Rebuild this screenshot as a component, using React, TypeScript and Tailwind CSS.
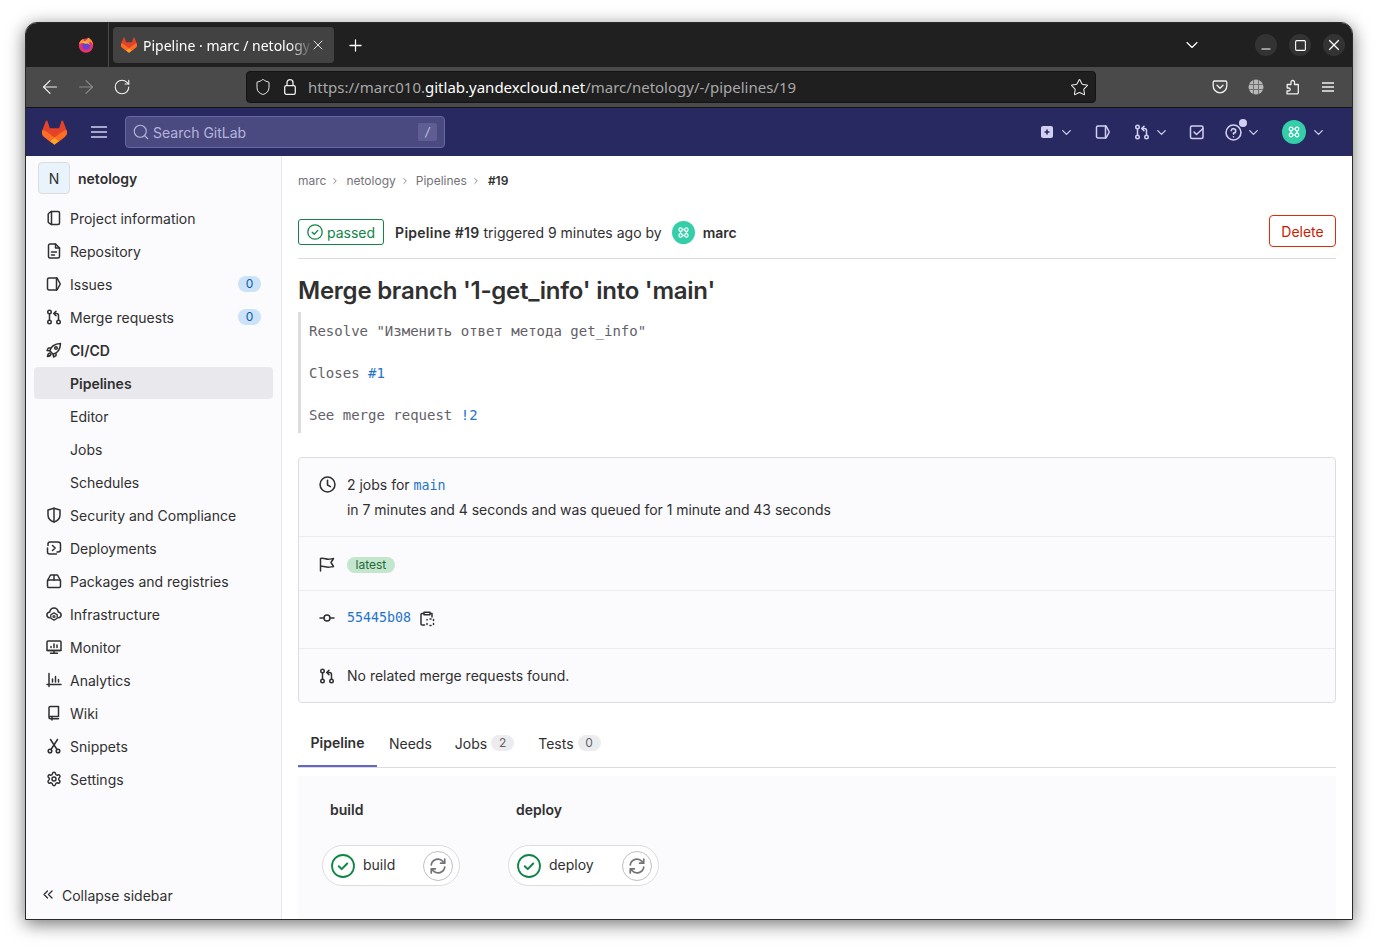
import { ArrowLeft, ArrowRight, ChevronDown, ChevronRight, Minus, Plus, RotateCw, Search, Settings, Shield, Square, Star, X } from "lucide-react";
import type { ReactNode } from "react";

function GitlabLogo({ size = 24 }: { size?: number }) {
  return (
    <svg width={size} height={size} viewBox="0 0 25 24" aria-hidden="true">
      <path fill="#E24329" d="m24.507 9.5-.034-.09L21.082.562a.896.896 0 0 0-1.694.091l-2.29 7.01H7.825L5.535.653a.898.898 0 0 0-1.694-.09L.451 9.411.416 9.5a6.297 6.297 0 0 0 2.09 7.278l.012.01.03.022 5.16 3.867 2.56 1.935 1.554 1.176a1.051 1.051 0 0 0 1.268 0l1.555-1.176 2.56-1.935 5.197-3.89.014-.01A6.297 6.297 0 0 0 24.507 9.5Z" />
      <path fill="#FC6D26" d="m24.507 9.5-.034-.09a11.44 11.44 0 0 0-4.56 2.051l-7.447 5.632 4.742 3.584 5.197-3.89.014-.01A6.297 6.297 0 0 0 24.507 9.5Z" />
      <path fill="#FCA326" d="m7.707 20.677 2.56 1.935 1.555 1.176a1.051 1.051 0 0 0 1.268 0l1.555-1.176 2.56-1.935-4.743-3.584-4.755 3.584Z" />
      <path fill="#FC6D26" d="M5.01 11.461a11.43 11.43 0 0 0-4.56-2.05L.416 9.5a6.297 6.297 0 0 0 2.09 7.278l.012.01.03.022 5.16 3.867 4.745-3.584-7.444-5.632Z" />
    </svg>
  );
}

function FirefoxLogo() {
  return (
    <svg width="16" height="16" viewBox="0 0 16 16" aria-hidden="true">
      <circle cx="8" cy="8.600" r="7.200" fill="#e6336c" />
      <path fill="#ff9a2e" d="M1 7c.6-2.600 2.600-4.600 4.600-5-.5 1 0 1.800.9 2.200C7.600 3.400 9.400 2.600 9.900.4c2.800 1.300 5.300 4 5.200 8-.5-2.300-2-3.800-3.600-4.200.8 1.500-.6 2-1.800 1.800L7 7.500 4.200 6 1 7Z" />
      <circle cx="8.200" cy="8.800" r="3.900" fill="#6f3fd0" />
      <path fill="#f7c13b" d="M4.500 5.300 8 4.800c2 .2 3.500 1.500 3.900 3.400-1-1.200-2.400-1.800-3.900-1.500-1.400.2-2.600-.4-3.500-1.400Z" />
    </svg>
  );
}

function Identicon({ size }: { size: number }) {
  return (
    <svg width={size} height={size} viewBox="0 0 24 24" aria-hidden="true" className="shrink-0">
      <circle cx="12" cy="12" r="12" fill="#34cfa8" />
      <g fill="none" stroke="#ffffff" strokeWidth="1.200">
        <circle cx="9" cy="9" r="1.800" />
        <circle cx="15" cy="9" r="1.800" />
        <circle cx="9" cy="15" r="1.800" />
        <circle cx="15" cy="15" r="1.800" />
        <path d="M10.800 9h2.400M10.800 15h2.400M9 10.800v2.400M15 10.800v2.400" />
      </g>
    </svg>
  );
}

function Bars({ width, gap, className = "" }: { width: number; gap: number; className?: string }) {
  const mid = gap + 1;
  return (
    <svg width={width} height={gap * 2 + 2} viewBox={`0 0 ${width} ${gap * 2 + 2}`} stroke="currentColor" strokeWidth="1.300" aria-hidden="true" className={`shrink-0 ${className}`}>
      <path d={`M0 1h${width}M0 ${mid}h${width}M0 ${mid + gap}h${width}`} />
    </svg>
  );
}

// gitlab style 16px outline icon
function Gl({ children, size = 16, className = "" }: { children: ReactNode; size?: number; className?: string }) {
  return (
    <svg width={size} height={size} viewBox="0 0 16 16" fill="none" stroke="currentColor" strokeWidth="1.500" strokeLinecap="round" strokeLinejoin="round" aria-hidden="true" className={`shrink-0 ${className}`}>
      {children}
    </svg>
  );
}

const icons: Record<string, ReactNode> = {
  project: <><path d="M5.500 1.500 3.200 2.800c-.6.3-1 .8-1 1.500v7.400c0 .7.400 1.200 1 1.500l2.300 1.300z" /><path d="M5.500 1.500H12a1.500 1.500 0 0 1 1.500 1.500v10a1.500 1.500 0 0 1-1.500 1.500H5.500" /></>,
  repo: <><path d="M9.500 1H4a1.500 1.500 0 0 0-1.500 1.500v11A1.500 1.500 0 0 0 4 15h8a1.500 1.500 0 0 0 1.500-1.500V5z" /><path d="M9.500 1v4h4M5.500 9h5M5.500 12h3" /></>,
  issues: <><path d="M10.500 2H3a1.500 1.500 0 0 0-1.500 1.500v9A1.500 1.500 0 0 0 3 14h7.500a1 1 0 0 0 1-.8L14.300 8l-2.800-5.200a1 1 0 0 0-1-.8z" /><path d="M10.500 2v12" /></>,
  merge: <><circle cx="3.500" cy="3" r="1.750" /><circle cx="3.500" cy="13" r="1.750" /><circle cx="12.500" cy="13" r="1.750" /><path d="M3.500 4.800v6.400M12.500 11.200V6.500c0-1.200-.8-2-2-2H8M10 2.200 7.700 4.500 10 6.800" /></>,
  rocket: <><path d="M5.500 10.500 3.800 8.800c1-4 4.700-7 10.700-7.300-.3 6-3.300 9.700-7.300 10.700z" /><circle cx="10" cy="6" r="1.300" /><path d="M4.500 6H2.300L1 8.500l2.800.3M10 11.500v2.200L7.500 15l-.3-2.800M4 11c-1.500.3-2.300 1.500-2.500 3.500 2-.2 3.200-1 3.500-2.500" /></>,
  shield: <><path d="M8 1.300 2 3v5c0 3.500 2.500 5.800 6 7 3.500-1.200 6-3.500 6-7V3z" /><path d="M8 1.300V15" /></>,
  deploy: <><path d="M2 5.500V4a2 2 0 0 1 2-2h8a2.500 2.500 0 0 1 2.500 2.500v5A2.500 2.500 0 0 1 12 12h-1" /><path d="M1.500 8v4a2 2 0 0 0 2 2h7" /><path d="m6.500 5.500 2.700 2.500-2.700 2.500" /></>,
  pkg: <><rect x="1.500" y="7" width="13" height="7.500" rx="1.200" /><path d="M1.500 7.500 4.500 2h7l3 5.500M8 2v5" /></>,
  infra: <><path d="M3.300 11.800C1.800 11.400.9 10.300.9 9c0-1.600 1.200-2.800 2.800-3C4.200 3.600 6 2 8 2s3.800 1.600 4.300 4c1.600.2 2.800 1.400 2.800 3 0 1.300-.9 2.400-2.400 2.800" /><circle cx="8" cy="10.500" r="1" strokeWidth="1.200" /><path d="m8 6.900 3.200 1.800v3.600L8 14.100l-3.200-1.800V8.700z" strokeWidth="1.300" /></>,
  monitor: <><rect x="1" y="2" width="14" height="9.500" rx="1" /><path d="M1 11.500h14M8 11.500V14M4.500 14.300h7M5 8.500V7.500M8 8.500V5M11 8.500V6" /></>,
  analytics: <><path d="M3 1.500v13M1 12.500h14M6.500 10V7M9.500 10V4.500M12.500 10V7.500" /></>,
  wiki: <><path d="M3 12.500V2.800C3 2 3.700 1.500 4.400 1.500h8.100V11.500H4.300C3.500 11.500 3 12 3 12.500c0 .7.500 1.200 1.300 1.200h8.200" /><path d="M6 11.500v3.500" /></>,
  snippets: <><circle cx="4" cy="13" r="1.800" /><circle cx="12" cy="13" r="1.800" /><path d="M5 11.500 11.500 1.500M11 11.500 4.500 1.500" /></>,
};

const navTop = [
  { icon: "project", label: "Project information" },
  { icon: "repo", label: "Repository" },
  { icon: "issues", label: "Issues", count: 0 },
  { icon: "merge", label: "Merge requests", count: 0 },
];
const navBottom = [
  { icon: "shield", label: "Security and Compliance" },
  { icon: "deploy", label: "Deployments" },
  { icon: "pkg", label: "Packages and registries" },
  { icon: "infra", label: "Infrastructure" },
  { icon: "monitor", label: "Monitor" },
  { icon: "analytics", label: "Analytics" },
  { icon: "wiki", label: "Wiki" },
  { icon: "snippets", label: "Snippets" },
  { icon: "settings", label: "Settings" },
];

function NavRow({ icon, label, count, bold }: { icon?: string; label: string; count?: number; bold?: boolean }) {
  return (
    <div className={`flex h-[32px] items-center rounded mx-[8px] mb-[1px] pl-[12px] pr-[12px] text-[#303030] ${bold ? "font-semibold" : ""}`}>
      <span className="w-[24px] shrink-0">
        {icon === "settings" ? <Settings size={16} strokeWidth={2.200} /> : icon ? <Gl>{icons[icon]}</Gl> : null}
      </span>
      <span className="flex-1">{label}</span>
      {count !== undefined ? (
        <span className="flex h-[16px] w-[23px] items-center justify-center rounded-full bg-[#cbe2f9] text-[12px] text-[#0b5cad]">{count}</span>
      ) : null}
    </div>
  );
}

function Sidebar() {
  return (
    <aside className="flex w-[256px] shrink-0 flex-col border-r border-[#e9e8ed] bg-[#fbfafd] text-[14px]">
      <div className="flex items-center gap-[8px] pl-[12px] pt-[6px] pb-[8px]">
        <div className="flex h-[32px] w-[32px] items-center justify-center rounded border border-[#dcdcde] bg-[#e9f3fc] text-[#303030]">N</div>
        <span className="font-semibold text-[#303030]">netology</span>
      </div>
      {navTop.map((n) => <NavRow key={n.label} {...n} />)}
      <NavRow icon="rocket" label="CI/CD" bold />
      <div className="mx-[8px] mb-[1px] flex h-[32px] items-center rounded bg-[#e9e8ed] pl-[36px] font-semibold text-[#303030]">Pipelines</div>
      <NavRow label="Editor" />
      <NavRow label="Jobs" />
      <NavRow label="Schedules" />
      {navBottom.map((n) => <NavRow key={n.label} {...n} />)}
      <div className="mt-auto flex h-[48px] items-center pl-[16px] text-[#303030]">
        <svg width="12" height="12" viewBox="0 0 12 12" fill="none" stroke="currentColor" strokeWidth="1.300" strokeLinecap="round" strokeLinejoin="round" aria-hidden="true">
          <path d="M5.500 2 2 5.500 5.500 9M10 2 6.500 5.500 10 9" />
        </svg>
        <span className="ml-[8px]">Collapse sidebar</span>
      </div>
    </aside>
  );
}

function InfoRow({ icon, children, className }: { icon: ReactNode; children: ReactNode; className: string }) {
  return (
    <div className={`flex px-[20px] ${className}`}>
      <span className="w-[28px] shrink-0 text-[#303030]">{icon}</span>
      <div className="min-w-0 flex-1">{children}</div>
    </div>
  );
}

function JobPill({ name, width }: { name: string; width: string }) {
  return (
    <div className={`flex h-[41px] items-center rounded-full border border-[#dcdcde] bg-white pl-[8px] ${width}`}>
      <svg width="24" height="24" viewBox="0 0 24 24" fill="none" aria-hidden="true" className="shrink-0">
        <circle cx="12" cy="12" r="11" stroke="#108548" strokeWidth="1.800" />
        <path d="m7.800 12.300 2.900 2.800 5.500-5.600" stroke="#108548" strokeWidth="2" strokeLinecap="round" strokeLinejoin="round" />
      </svg>
      <span className="-mt-[2px] ml-[8px] flex-1 text-[14px] text-[#303030]">{name}</span>
      <span className="mr-[6px] flex h-[30px] w-[30px] items-center justify-center rounded-full border border-[#bfbfc3] text-[#737278]">
        <Gl size={18}><path d="M2 7a6 6 0 0 1 10.500-3L14 5.500M14 1.800v3.700h-3.700M14 9a6 6 0 0 1-10.500 3L2 10.500M2 14.200v-3.700h3.700" /></Gl>
      </span>
    </div>
  );
}

export default function App() {
  return (
    <div className="h-[948px] w-[1378px] overflow-hidden bg-white pt-[22px] pl-[25px] [font-family:Inter,sans-serif]">
      <div className="flex h-[898px] w-[1328px] flex-col overflow-hidden rounded-t-[12px] border border-[#2a2a2a] bg-white shadow-[0_4px_18px_rgba(0,0,0,0.55)]">
        {/* browser tabs */}
        <div className="flex h-[44px] shrink-0 items-center bg-[#202020] text-white [font-family:'Noto_Sans',sans-serif]">
          <div className="flex h-full w-[83px] items-center justify-end border-r border-[#4a4a4a] pr-[14px]"><FirefoxLogo /></div>
          <div className="ml-[4px] flex h-[36px] w-[221px] items-center rounded bg-[#424242] pl-[8px]">
            <GitlabLogo size={16} />
            <span className="ml-[6px] w-[170px] overflow-hidden whitespace-nowrap text-[14px] [mask-image:linear-gradient(to_right,black_86%,transparent)]">Pipeline · marc / netology</span>
            <X size={16} className="-ml-[3px] shrink-0 text-[#dddddd]" strokeWidth={1.500} />
          </div>
          <Plus size={19} className="ml-[12px]" strokeWidth={1.600} />
          <ChevronDown size={20} className="ml-[817px]" strokeWidth={1.400} />
          <div className="ml-[53px] flex gap-[12px]">
            <span className="flex h-[22px] w-[22px] items-center justify-center rounded-full bg-[#333333]"><Minus size={14} className="translate-y-[4px]" /></span>
            <span className="flex h-[22px] w-[22px] items-center justify-center rounded-full bg-[#333333]"><Square size={13} strokeWidth={2} /></span>
            <span className="flex h-[22px] w-[22px] items-center justify-center rounded-full bg-[#333333]"><X size={18} strokeWidth={1.600} /></span>
          </div>
        </div>
        {/* browser toolbar */}
        <div className="flex h-[41px] shrink-0 items-center border-b border-b-[#141414] bg-[#4a4a4a] text-[#f0f0f0] [font-family:'Noto_Sans',sans-serif]">
          <ArrowLeft size={22} className="ml-[13px]" strokeWidth={1.300} />
          <ArrowRight size={22} className="ml-[14px] text-[#8a8a8a]" strokeWidth={1.300} />
          <RotateCw size={18} className="ml-[16px]" strokeWidth={1.500} />
          <div className="ml-[115px] flex h-[32px] w-[850px] items-center rounded border border-[#141414] bg-[#1f1f1f] pl-[7px]">
            <Shield size={18} strokeWidth={1.300} />
            <svg width="12" height="16" viewBox="0 0 12 16" fill="none" stroke="currentColor" strokeWidth="1.300" aria-hidden="true" className="ml-[12px]">
              <rect x="0.700" y="6.700" width="10.600" height="8.600" rx="1.600" />
              <path d="M3 6.500V3.700a3 3 0 0 1 6 0v2.800" />
            </svg>
            <span className="ml-[12px] flex-1 whitespace-nowrap text-[15px] text-[#a8a8a8]">https://marc010.<span className="text-white">gitlab.yandexcloud.net</span>/marc/netology/-/pipelines/19</span>
            <Star size={19} className="mr-[6px]" strokeWidth={1.300} />
          </div>
          <svg width="16" height="16" viewBox="0 0 16 16" fill="none" stroke="currentColor" strokeWidth="1.300" strokeLinejoin="round" strokeLinecap="round" aria-hidden="true" className="ml-[116px]">
            <path d="M2.500 2h11c.8 0 1.300.5 1.300 1.300V7a6.800 6.800 0 0 1-13.600 0V3.300C1.200 2.500 1.700 2 2.500 2z" />
            <path d="m5 6.300 3 2.900 3-2.900" />
          </svg>
          <svg width="16" height="16" viewBox="0 0 16 16" fill="none" aria-hidden="true" className="ml-[20px]">
            <circle cx="8" cy="8" r="7.500" fill="#b8b8b8" />
            <path d="M1 5.500h14M1 10.500h14M5.500 1v14M10.500 1v14" stroke="#6a6a6a" strokeWidth="0.900" />
          </svg>
          <svg width="16" height="16" viewBox="0 0 16 16" fill="none" stroke="currentColor" strokeWidth="1.300" strokeLinejoin="round" aria-hidden="true" className="ml-[21px]">
            <path d="M2 14.800h10.500c.5 0 .8-.3.800-.8V5.500h-3.800V3.700a1.800 1.800 0 1 0-3.500 0v1.800H2.200V9h1.500a1.500 1.500 0 0 1 0 3H2z" />
          </svg>
          <Bars width={12} gap={4} className="ml-[21px]" />
        </div>
        {/* gitlab top nav */}
        <div className="flex h-[48px] shrink-0 items-center bg-[#292961] text-[#d1d0f0]">
          <span className="ml-[16px]"><GitlabLogo size={25} /></span>
          <Bars width={16} gap={5} className="ml-[24px]" />
          <div className="ml-[18px] flex h-[32px] w-[320px] items-center rounded border border-[#6666a8] bg-[#4a4a80] pl-[6px] text-[14px] text-[#b5b4dc]">
            <Search size={18} strokeWidth={1.500} />
            <span className="ml-[3px] flex-1">Search GitLab</span>
            <span className="mr-[7px] flex h-[18px] w-[19px] items-center justify-center rounded-[2px] bg-[#5e5e94] text-[12px] italic text-[#c8c7e8]">/</span>
          </div>
          <svg width="14" height="14" viewBox="0 0 14 14" aria-hidden="true" className="ml-[595px]">
            <rect x="1" y="1" width="12" height="12" rx="2" fill="#d1d0f0" />
            <path d="M7 4.500v5M4.500 7h5" stroke="#292961" strokeWidth="1.600" />
          </svg>
          <ChevronDown size={15} className="ml-[5px]" strokeWidth={2} />
          <Gl className="ml-[21px]">{icons.issues}</Gl>
          <Gl className="ml-[23px]">{icons.merge}</Gl>
          <ChevronDown size={15} className="ml-[4px]" strokeWidth={2} />
          <Gl className="ml-[20px]"><rect x="1.500" y="2" width="12.500" height="12.500" rx="1.500" /><path d="m5 8 2.500 2.500 6.500-6" /></Gl>
          <span className="relative ml-[20px] flex items-center">
            <Gl size={17}><circle cx="8" cy="8" r="7" /><path d="M5.900 6.200A2.100 2.100 0 1 1 8 8.600v.9M8 12v.1" /></Gl>
            <span className="absolute left-[14px] top-[-5px] h-[8px] w-[8px] rounded-full bg-[#d1d0f0]" />
          </span>
          <ChevronDown size={15} className="ml-[4px]" strokeWidth={2} />
          <span className="ml-[21px]"><Identicon size={24} /></span>
          <ChevronDown size={15} className="ml-[5px]" strokeWidth={2} />
        </div>
        {/* page */}
        <div className="flex min-h-0 flex-1">
          <Sidebar />
          <main className="min-w-0 flex-1 overflow-hidden px-[16px] text-[14px] text-[#303030]">
            <div className="flex h-[50px] items-center text-[12px] text-[#737278]">
              <span>marc</span><ChevronRight size={10} className="ml-[4px] mr-[6px]" />
              <span>netology</span><ChevronRight size={10} className="ml-[4px] mr-[6px]" />
              <span>Pipelines</span><ChevronRight size={10} className="ml-[4px] mr-[7px]" />
              <span className="font-semibold text-[#303030]">#19</span>
            </div>
            <div className="flex items-center border-b border-[#dcdcde] pt-[9px] pb-[11px]">
              <div className="mt-[2px] flex items-center">
                <span className="flex h-[26px] items-center rounded-[3px] border border-[#108548] px-[8px] text-[#108548]">
                  <svg width="16" height="16" viewBox="0 0 16 16" fill="none" aria-hidden="true">
                    <circle cx="8" cy="8" r="7.200" stroke="#108548" strokeWidth="1.300" />
                    <path d="m5.200 8.200 2 2 3.600-3.800" stroke="#108548" strokeWidth="1.300" strokeLinecap="round" strokeLinejoin="round" />
                  </svg>
                  <span className="ml-[4px]">passed</span>
                </span>
                <span className="ml-[11px] font-semibold tracking-[0.018em]">Pipeline #19</span>
                <span className="ml-[4px]">triggered 9 minutes ago by</span>
                <span className="ml-[10px]"><Identicon size={23} /></span>
                <span className="ml-[8px] font-semibold">marc</span>
              </div>
              <span className="ml-auto flex h-[32px] w-[67px] items-center justify-center rounded border border-[#dd2b0e] text-[#c91c00]">Delete</span>
            </div>
            <h1 className="mt-[16px] text-[24px] leading-[32px] font-semibold tracking-[-0.01em] text-[#303030]">Merge branch '1-get_info' into 'main'</h1>
            <div className="mt-[5px] border-l-[3px] border-[#dcdcde] pt-[9px] pb-[7px] pl-[8px] leading-[21px] [font-family:'DejaVu_Sans_Mono',monospace] text-[#626168] text-[14px]">
              <div>Resolve "Изменить ответ метода get_info"</div>
              <div className="h-[21px]" />
              <div>Closes <span className="text-[#1f75cb]">#1</span></div>
              <div className="h-[21px]" />
              <div>See merge request <span className="text-[#1f75cb]">!2</span></div>
            </div>
            <section className="mt-[24px] flex flex-col divide-y divide-[#ececef] rounded border border-[#dcdcde] bg-[#fbfafd]">
              <InfoRow className="h-[79px] items-start pt-[16px]" icon={<Gl size={17} className="mt-[2px]"><circle cx="8" cy="8" r="7" /><path d="M8 4v4.500l2.800 1.500" /></Gl>}>
                <div className="leading-[22px]">2 jobs for <span className="[font-family:'DejaVu_Sans_Mono',monospace] text-[13.300px] text-[#1f75cb]">main</span></div>
                <div className="mt-[2px] leading-[22px] tracking-[-0.002em]">in 7 minutes and 4 seconds and was queued for 1 minute and 43 seconds</div>
              </InfoRow>
              <InfoRow className="h-[54px] items-center" icon={<Gl><path d="M1.500 15V2.500c4-1 5 1 8 .8 1.500-.1 3-.5 5-.8L12 6.500l2.500 4c-2 .3-3.500.7-5 .8-3 .2-4-1.500-8-.8" /></Gl>}>
                <span className="inline-flex h-[16px] items-center rounded-full bg-[#c3e6cd] px-[8.500px] text-[12px] text-[#24663b]">latest</span>
              </InfoRow>
              <InfoRow className="h-[58px] items-center" icon={<Gl className="-mt-[4px]"><circle cx="8" cy="8" r="3" /><path d="M1 8h4M11 8h4" /></Gl>}>
                <div className="-mt-[3px] flex items-center">
                  <span className="[font-family:'DejaVu_Sans_Mono',monospace] text-[13.300px] text-[#1f75cb]">55445b08</span>
                  <Gl size={16} className="ml-[8px] mt-[1px]"><path d="M4.500 2.500H3A1 1 0 0 0 2 3.500v9.500a1 1 0 0 0 1 1h2.500M11.500 2.500H13v3.500M5 1.200h6v2.600H5zM8 8.500v.5M11 8h1M14.500 8.500v1M14.500 12.500v1M11 14.500h1M8 12.500v1" /></Gl>
                </div>
              </InfoRow>
              <InfoRow className="h-[53px] items-center" icon={<Gl>{icons.merge}</Gl>}>
                No related merge requests found.
              </InfoRow>
            </section>
            <div className="mt-[16px] flex h-[49px] items-stretch border-b border-[#dcdcde]">
              <span className="flex w-[79px] items-center justify-center border-b-2 border-[#6666c4] font-semibold">Pipeline</span>
              <span className="ml-[12px] flex items-center">Needs</span>
              <span className="ml-[23px] flex items-center">Jobs<span className="ml-[4px] flex h-[16px] w-[23px] items-center justify-center rounded-full bg-[#ececef] text-[12px] text-[#626168]">2</span></span>
              <span className="ml-[24px] flex items-center">Tests<span className="ml-[4px] flex h-[16px] w-[23px] items-center justify-center rounded-full bg-[#ececef] text-[12px] text-[#626168]">0</span></span>
            </div>
            <div className="mt-[8px] flex h-[200px] gap-[48px] bg-[#fbfafd] pl-[24px] pt-[24px]">
              <div className="w-[138px]">
                <div className="pl-[8px] font-semibold leading-[20px]">build</div>
                <div className="mt-[25px]"><JobPill name="build" width="w-[138px]" /></div>
              </div>
              <div>
                <div className="pl-[8px] font-semibold leading-[20px]">deploy</div>
                <div className="mt-[25px]"><JobPill name="deploy" width="w-[151px]" /></div>
              </div>
            </div>
          </main>
        </div>
      </div>
    </div>
  );
}
